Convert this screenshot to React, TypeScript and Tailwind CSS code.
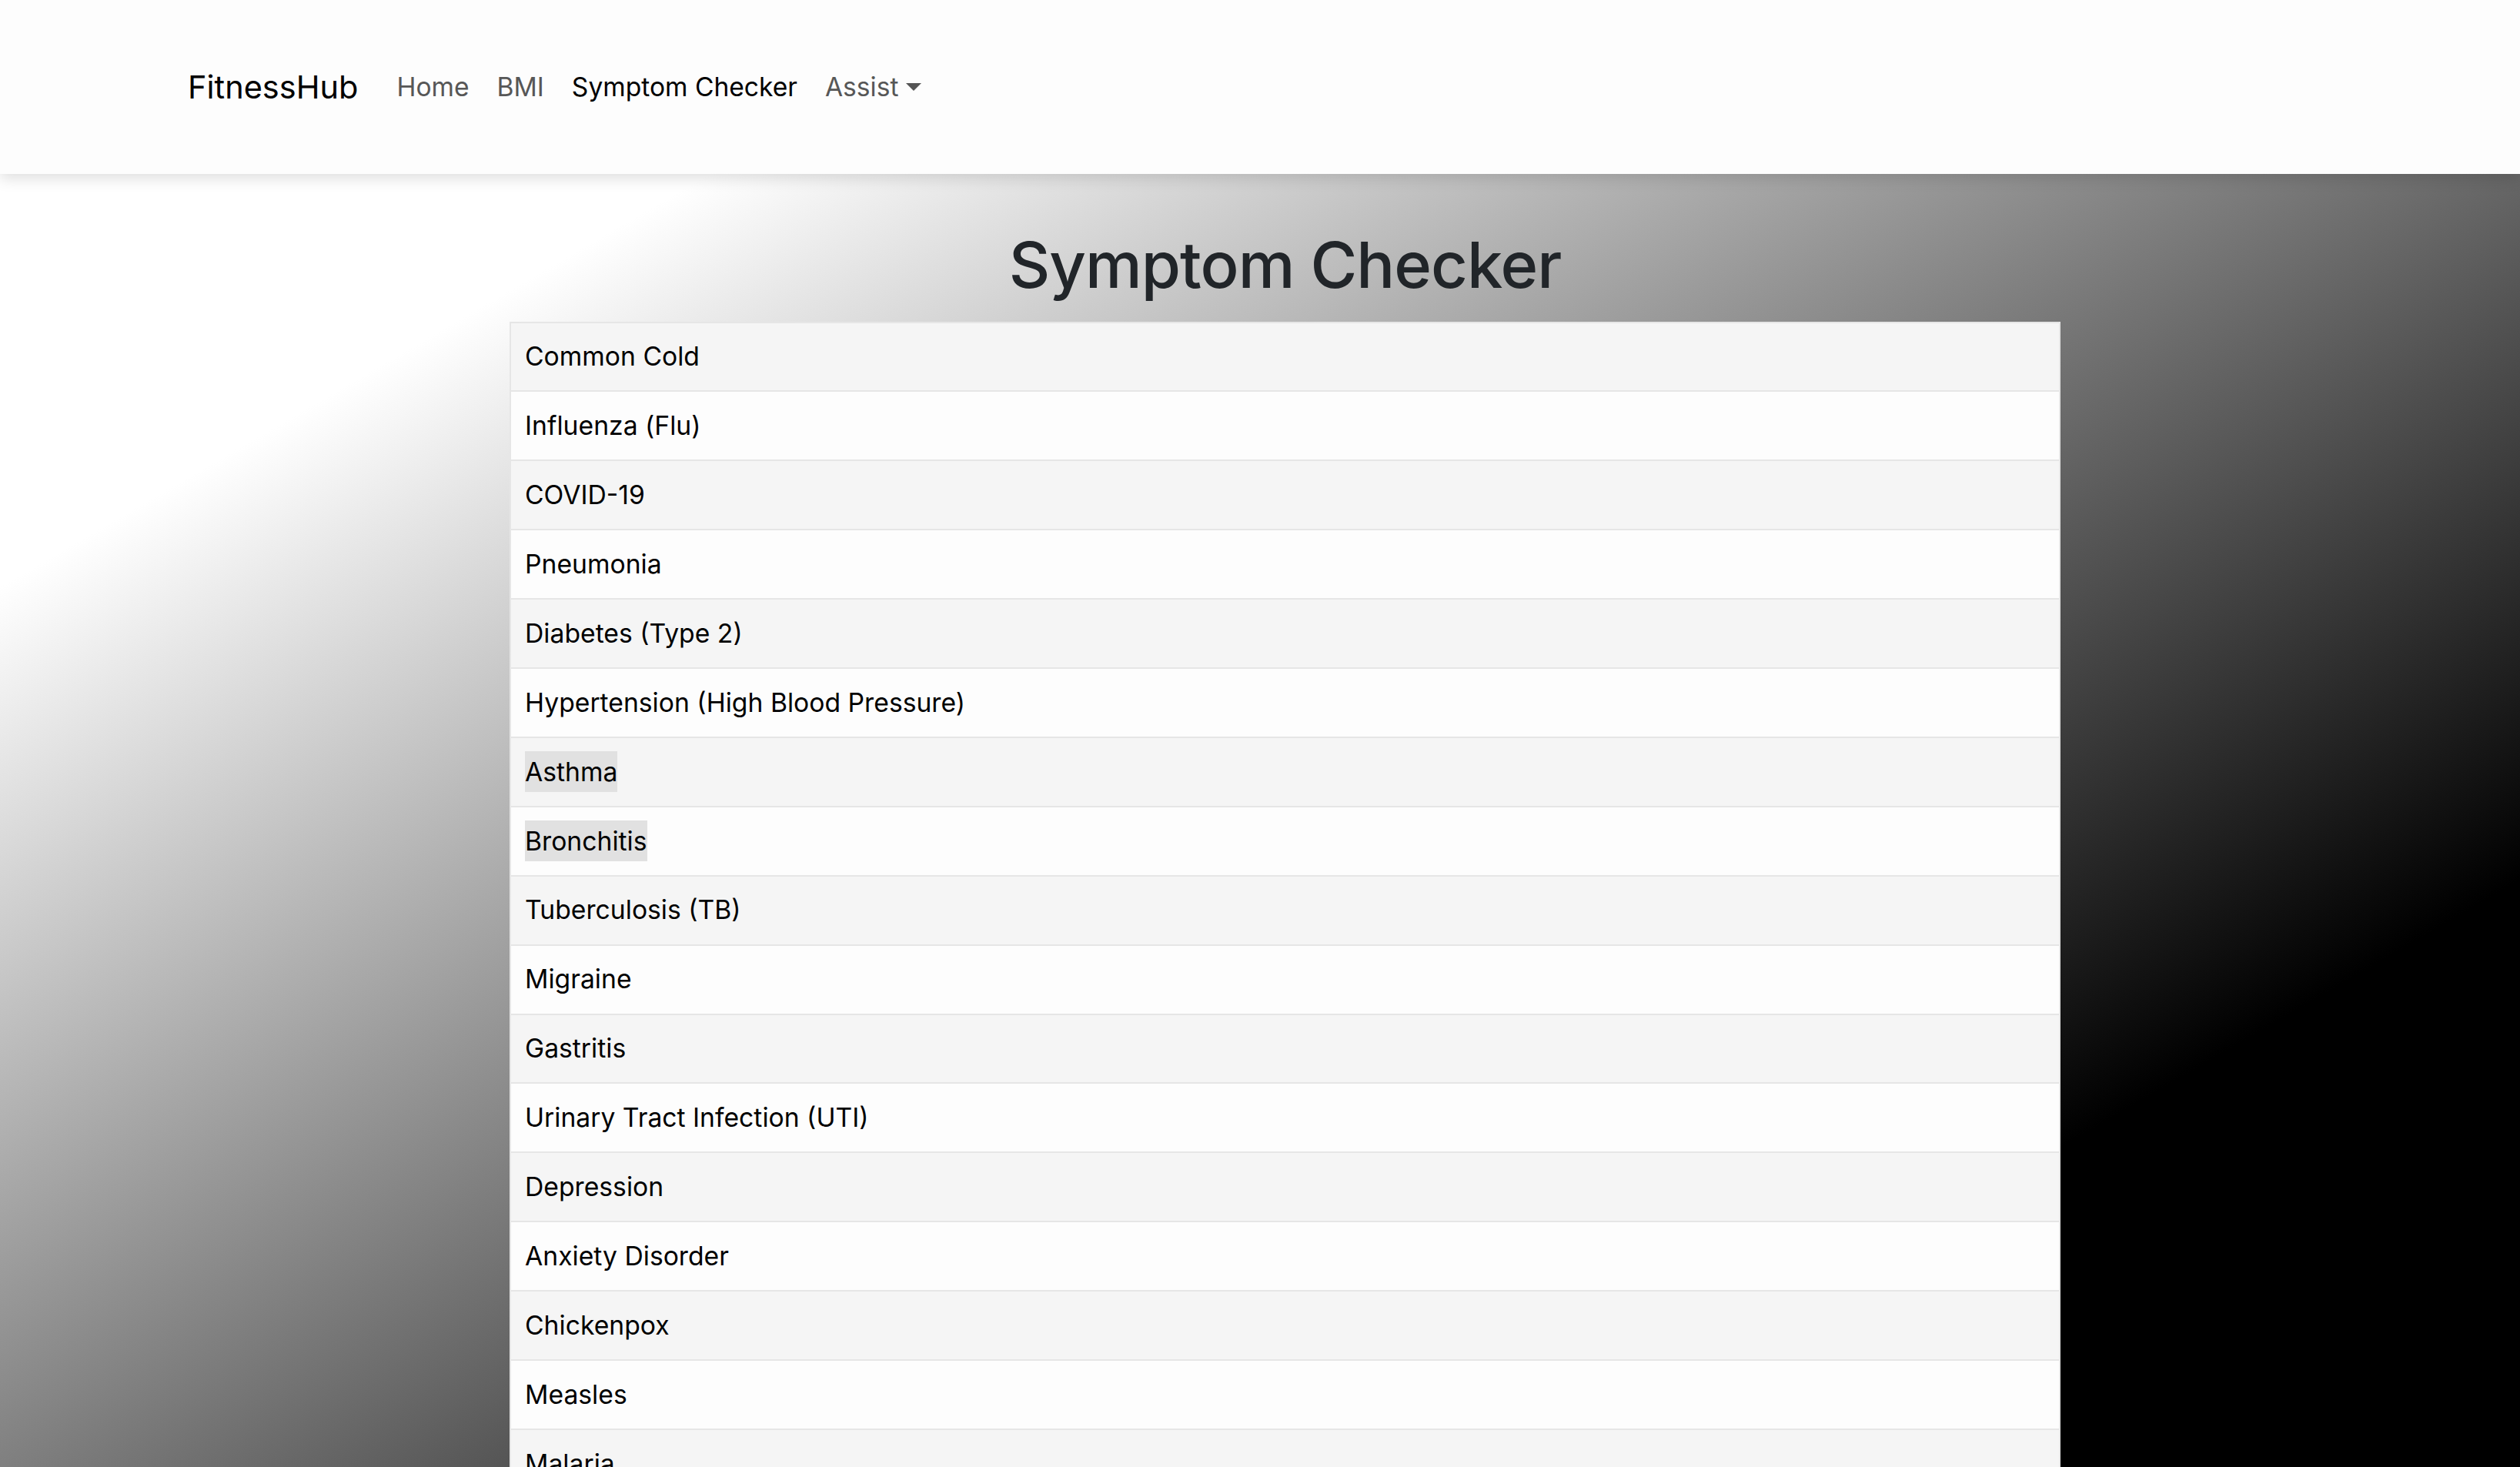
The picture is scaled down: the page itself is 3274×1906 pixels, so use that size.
const items: string[] = [
  "Common Cold",
  "Influenza (Flu)",
  "COVID-19",
  "Pneumonia",
  "Diabetes (Type 2)",
  "Hypertension (High Blood Pressure)",
  "Asthma",
  "Bronchitis",
  "Tuberculosis (TB)",
  "Migraine",
  "Gastritis",
  "Urinary Tract Infection (UTI)",
  "Depression",
  "Anxiety Disorder",
  "Chickenpox",
  "Measles",
  "Malaria",
  "Hepatitis B",
  "Arthritis",
];

const highlighted = new Set(["Asthma", "Bronchitis"]);

export default function App() {
  return (
    <div className="h-screen overflow-hidden bg-[linear-gradient(to_bottom_right,#ffffff_20%,#000000_80%)] font-['Inter',sans-serif]">
      <nav className="relative z-10 flex h-[226px] items-center bg-[#fdfdfd] pl-[244px] shadow-[0_6px_18px_rgba(0,0,0,0.13)]">
        <span className="mr-[50px] text-[41.5px] text-black">FitnessHub</span>
        <div className="flex items-center gap-[36px] text-[33.6px]">
          <span className="text-[#575757]">Home</span>
          <span className="text-[#575757]">BMI</span>
          <span className="text-black">Symptom Checker</span>
          <span className="flex items-center text-[#575757]">
            Assist
            <span className="ml-[10px] inline-block h-0 w-0 border-x-[10px] border-t-[10px] border-x-transparent border-t-[#555555]" />
          </span>
        </div>
      </nav>
      <main className="pl-[65px]">
        <div className="mx-auto w-[2015px]">
          <h1 className="mt-[69px] text-center text-[83px] leading-[1.2] font-medium tracking-[-1px] text-[#212529]">
            Symptom Checker
          </h1>
          <ul className="mt-[23px] border-x-2 border-t-2 border-[#e6e6e6]">
            {items.map((name, i) => (
              <li
                key={name}
                className={
                  i % 2 === 0
                    ? "flex h-[89.9px] items-center border-b-2 border-[#e6e6e6] bg-[#f5f5f5] pl-[18px] text-[33.7px] text-black"
                    : "flex h-[89.9px] items-center border-b-2 border-[#e6e6e6] bg-[#fdfdfd] pl-[18px] text-[33.7px] text-black"
                }
              >
                {highlighted.has(name) ? (
                  <span className="inline-block bg-[#e1e1e1] leading-[53px]">{name}</span>
                ) : (
                  <span>{name}</span>
                )}
              </li>
            ))}
          </ul>
        </div>
      </main>
    </div>
  );
}
